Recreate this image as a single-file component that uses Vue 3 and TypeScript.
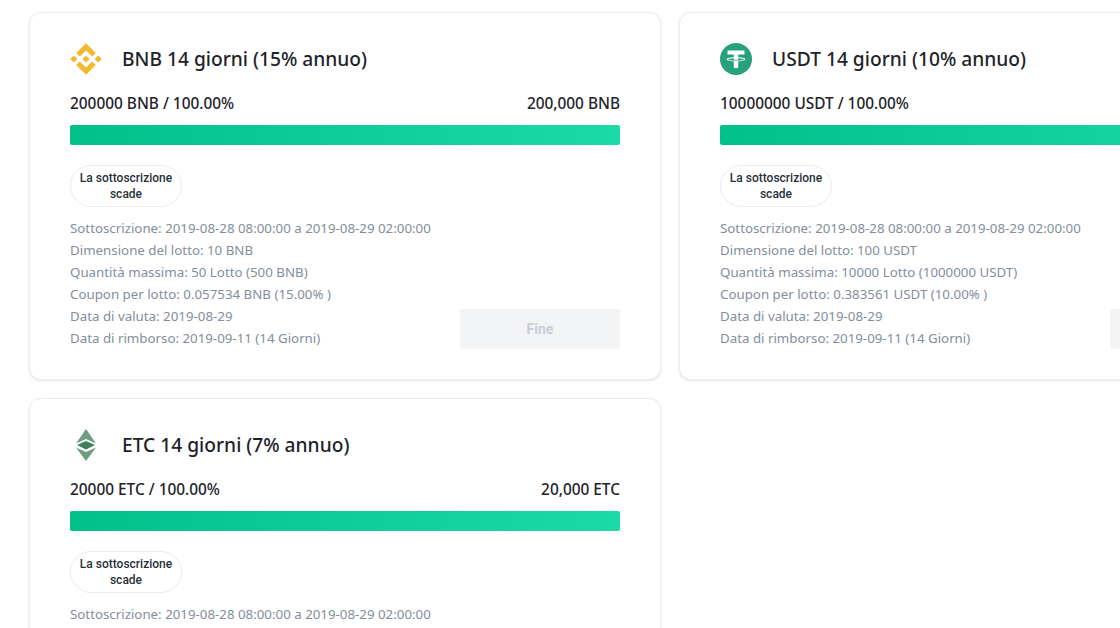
<template>
  <div class="page">
    <div class="card-grid">
      <div v-for="card in cards" :key="card.coin" class="card">
        <div class="card-title">
          <svg v-if="card.coin === 'BNB'" class="coin-icon" viewBox="0 0 32 32">
            <path fill="#f3ba2f" d="M9.8 13.6 L16 7.4 L22.2 13.6 L25.8 10 L16 .2 L6.2 10 Z M.2 16 L3.8 12.4 L7.4 16 L3.8 19.6 Z M9.8 18.4 L16 24.6 L22.2 18.4 L25.8 22 L16 31.8 L6.2 22 Z M24.6 16 L28.2 12.4 L31.8 16 L28.2 19.6 Z M19.6 16 L16 19.6 L12.4 16 L16 12.4 Z" />
          </svg>
          <svg v-else-if="card.coin === 'USDT'" class="coin-icon" viewBox="0 0 32 32">
            <circle cx="16" cy="16" r="16" fill="#26a17b" />
            <path fill="#fff" d="M7.5 7.5 H24.5 V11.5 H18.2 V14.3 C22.2 14.5 25.5 15.3 25.5 16.3 C25.5 17.3 22.2 18.1 18.2 18.3 V25 H13.8 V18.3 C9.8 18.1 6.5 17.3 6.5 16.3 C6.5 15.3 9.8 14.5 13.8 14.3 V11.5 H7.5 Z M13.8 15.3 C10.6 15.5 8.2 16 8.2 16.5 C8.2 17.1 11.7 17.6 16 17.6 C20.3 17.6 23.8 17.1 23.8 16.5 C23.8 16 21.4 15.5 18.2 15.3 V16.7 H13.8 Z" />
          </svg>
          <svg v-else class="coin-icon" viewBox="0 0 32 32">
            <path fill="#6f9c7f" d="M16 0 L26 14.5 L16 10 L6 14.5 Z" />
            <path fill="#3f7f5c" d="M16 12 L25 16 L16 20.5 L7 16 Z" />
            <path fill="#6f9c7f" d="M6 18.5 L16 23 L26 18.5 L16 32 Z" />
          </svg>
          <span class="title-text">{{ card.title }}</span>
        </div>
        <div class="amounts">
          <span>{{ card.sold }}</span>
          <span>{{ card.total }}</span>
        </div>
        <div class="progress"><div class="progress-fill" /></div>
        <div class="status">La sottoscrizione scade</div>
        <div class="card-bottom">
          <div class="details">
            <div v-for="line in card.lines" :key="line">{{ line }}</div>
          </div>
          <button class="end-btn" disabled>Fine</button>
        </div>
      </div>
    </div>
  </div>
</template>

<script setup lang="ts">
interface Card {
  coin: string
  title: string
  sold: string
  total: string
  lines: string[]
}

const period = 'Sottoscrizione: 2019-08-28 08:00:00 a 2019-08-29 02:00:00'
const valueDate = 'Data di valuta: 2019-08-29'
const refund = 'Data di rimborso: 2019-09-11 (14 Giorni)'

const cards: Card[] = [
  {
    coin: 'BNB',
    title: 'BNB 14 giorni (15% annuo)',
    sold: '200000 BNB / 100.00%',
    total: '200,000 BNB',
    lines: [
      period,
      'Dimensione del lotto: 10 BNB',
      'Quantità massima: 50 Lotto (500 BNB)',
      'Coupon per lotto: 0.057534 BNB (15.00% )',
      valueDate,
      refund
    ]
  },
  {
    coin: 'USDT',
    title: 'USDT 14 giorni (10% annuo)',
    sold: '10000000 USDT / 100.00%',
    total: '10,000,000 USDT',
    lines: [
      period,
      'Dimensione del lotto: 100 USDT',
      'Quantità massima: 10000 Lotto (1000000 USDT)',
      'Coupon per lotto: 0.383561 USDT (10.00% )',
      valueDate,
      refund
    ]
  },
  {
    coin: 'ETC',
    title: 'ETC 14 giorni (7% annuo)',
    sold: '20000 ETC / 100.00%',
    total: '20,000 ETC',
    lines: [
      period,
      'Dimensione del lotto: 10 ETC',
      'Quantità massima: 500 Lotto (5000 ETC)',
      'Coupon per lotto: 0.026849 ETC (7.00% )',
      valueDate,
      refund
    ]
  }
]
</script>

<style>
html,
body {
  margin: 0;
  background: #fff;
  overflow: hidden;
}
</style>

<style scoped>
.page {
  width: 1120px;
  height: 628px;
  overflow: hidden;
  padding: 12px 0 0 29px;
  box-sizing: border-box;
  font-family: "Noto Sans", "Open Sans", sans-serif;
}

.card-grid {
  display: grid;
  grid-template-columns: 632px 632px;
  column-gap: 18px;
  row-gap: 18px;
}

.card {
  box-sizing: border-box;
  height: 368px;
  padding: 30px 40px 0 40px;
  background: #fff;
  border: 1px solid #eaecef;
  border-radius: 12px;
  box-shadow: 0 1px 3px rgba(0, 0, 0, 0.1);
}

.card-title {
  display: flex;
  align-items: center;
  gap: 20px;
  height: 32px;
  font-size: 19.2px;
  font-weight: 500;
  color: #1e2329;
}

.title-text {
  padding-bottom: 2px;
}

.coin-icon {
  width: 32px;
  height: 32px;
  flex: none;
}

.amounts {
  display: flex;
  justify-content: space-between;
  margin-top: 17px;
  height: 24px;
  line-height: 24px;
  font-size: 15.4px;
  font-weight: 500;
  color: #1e2329;
}

.progress {
  margin-top: 9px;
  height: 20px;
  border-radius: 2px;
  overflow: hidden;
}

.progress-fill {
  height: 100%;
  background: linear-gradient(90deg, #02c08a, #1cdaa8);
}

.status {
  box-sizing: border-box;
  width: 112px;
  height: 42px;
  margin-top: 20px;
  padding: 4px 6px;
  border: 1px solid #eaecef;
  border-radius: 21px;
  font-family: Roboto, sans-serif;
  font-size: 12px;
  font-weight: 500;
  line-height: 16px;
  text-align: center;
  color: #2b3139;
}

.card-bottom {
  display: flex;
  justify-content: space-between;
  align-items: flex-end;
  margin-top: 10px;
}

.details {
  font-size: 13.3px;
  line-height: 22px;
  color: #848e9c;
}

.end-btn {
  width: 160px;
  height: 40px;
  border: 0;
  border-radius: 3px;
  background: #f3f4f6;
  color: #c9ced6;
  font-family: Roboto, sans-serif;
  font-size: 14px;
  font-weight: 700;
}
</style>
